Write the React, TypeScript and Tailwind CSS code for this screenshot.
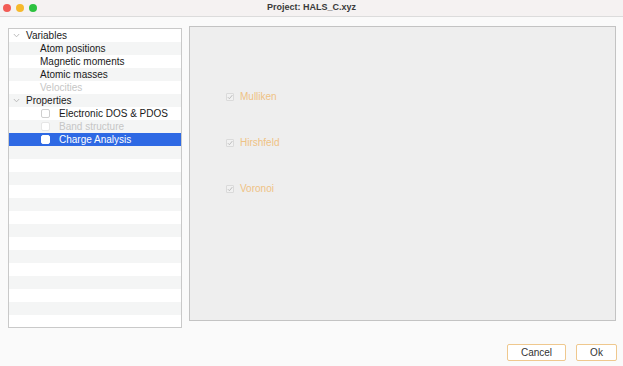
import React from "react";

type Row = {
  label?: string;
  kind?: "group" | "child" | "check";
  disabled?: boolean;
  selected?: boolean;
};

const rows: Row[] = [
  { label: "Variables", kind: "group" },
  { label: "Atom positions", kind: "child" },
  { label: "Magnetic moments", kind: "child" },
  { label: "Atomic masses", kind: "child" },
  { label: "Velocities", kind: "child", disabled: true },
  { label: "Properties", kind: "group" },
  { label: "Electronic DOS & PDOS", kind: "check" },
  { label: "Band structure", kind: "check", disabled: true },
  { label: "Charge Analysis", kind: "check", selected: true },
];

const Chevron = () => (
  <svg width="7" height="5" viewBox="0 0 7 5" className="shrink-0">
    <path d="M0.8 1 L3.5 3.8 L6.2 1" fill="none" stroke="#b4b4b4" strokeWidth="0.9" />
  </svg>
);

const Check = () => (
  <svg width="7" height="6" viewBox="0 0 7 6">
    <path d="M1 3.2 L2.8 5 L6.2 0.8" fill="none" stroke="#b3b3b3" strokeWidth="1" />
  </svg>
);

export default function App() {
  const allRows: Row[] = [...rows];
  while (allRows.length < 23) allRows.push({});

  return (
    <div
      className="w-[623px] h-[366px] bg-[#fafafa] flex flex-col overflow-hidden"
      style={{ fontFamily: '"Liberation Sans", Arial, sans-serif' }}
    >
      {/* Title bar */}
      <div className="h-[17px] shrink-0 bg-[#f5f2f2] border-b border-[#dcdcdc] flex items-center relative">
        <div className="flex items-center gap-[5px] pl-[3px]">
          <span className="w-[8px] h-[8px] rounded-full bg-[#f25b55]" />
          <span className="w-[8px] h-[8px] rounded-full bg-[#f6b92c]" />
          <span className="w-[8px] h-[8px] rounded-full bg-[#2dc240]" />
        </div>
        <div className="absolute inset-0 flex items-center justify-center text-[9px] text-[#3a3a3a] font-semibold">
          Project: HALS_C.xyz
        </div>
      </div>

      {/* Body */}
      <div className="flex items-start pl-[8px] pr-[7px] pt-[11px]">
        {/* Left tree */}
        <div className="w-[174px] h-[300px] border border-[#c9c9c9] bg-white overflow-hidden shrink-0">
          {allRows.map((r, i) => {
            const bg = r.selected ? "bg-[#2e69e4]" : i % 2 === 0 ? "bg-white" : "bg-[#f4f5f5]";
            const textColor = r.selected
              ? "text-white"
              : r.disabled
              ? "text-[#c6c6c6]"
              : "text-[#1a1a1a]";
            return (
              <div key={i} className={`h-[13px] flex items-center text-[10px] leading-none ${bg} ${textColor}`}>
                {r.kind === "group" && (
                  <div className="flex items-center pl-[4px] gap-[6px]">
                    <Chevron />
                    <span>{r.label}</span>
                  </div>
                )}
                {r.kind === "child" && <span className="pl-[31px]">{r.label}</span>}
                {r.kind === "check" && (
                  <div className="flex items-center pl-[32px]">
                    <span
                      className={`w-[9px] h-[9px] rounded-[2px] border shrink-0 ${
                        r.selected
                          ? "bg-white border-white"
                          : r.disabled
                          ? "bg-white border-[#e6e6e6]"
                          : "bg-white border-[#cfcfcf]"
                      }`}
                    />
                    <span className="pl-[9px]">{r.label}</span>
                  </div>
                )}
              </div>
            );
          })}
        </div>

        {/* Right panel */}
        <div className="ml-[7px] mt-[-2px] flex-1 h-[295px] border border-[#c3c3c3] bg-[#eeeeee] flex flex-col pl-[36px] pt-[64px] gap-[34px]">
          {["Mulliken", "Hirshfeld", "Voronoi"].map((l) => (
            <div key={l} className="flex items-center h-[12px] gap-[6px]">
              <span className="w-[8px] h-[8px] border border-[#dadada] bg-[#f1f1f1] rounded-[1px] flex items-center justify-center">
                <Check />
              </span>
              <span className="text-[10px] leading-none text-[#eec284]">{l}</span>
            </div>
          ))}
        </div>
      </div>

      {/* Buttons */}
      <div className="flex justify-end gap-[10px] pr-[6px] mt-[16px]">
        <button className="w-[59px] h-[17px] bg-white border border-[#efc88e] rounded-[2px] text-[10px] text-[#333] leading-none">
          Cancel
        </button>
        <button className="w-[41px] h-[17px] bg-white border border-[#efc88e] rounded-[2px] text-[10px] text-[#333] leading-none">
          Ok
        </button>
      </div>
    </div>
  );
}
